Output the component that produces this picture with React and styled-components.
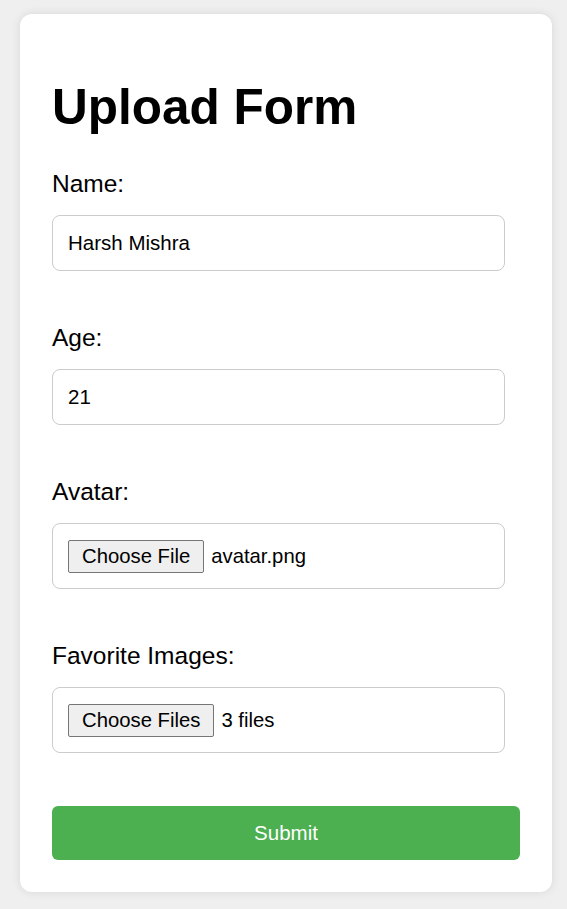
import React, { useState } from "react";
import styled, { createGlobalStyle } from "styled-components";

const GlobalStyle = createGlobalStyle`
  html, body {
    margin: 0;
    padding: 0;
    background: #efefef;
    font-family: "Liberation Sans", Arial, sans-serif;
  }
`;

const Page = styled.div`
  padding: 14px 15px 17px 20px;
`;

const Card = styled.div`
  background: #fff;
  border-radius: 12px;
  box-shadow: 0 0 10px rgba(0, 0, 0, 0.1);
  padding: 64px 32px 32px;
`;

const Title = styled.h1`
  margin: 0 0 35px;
  font-size: 49.5px;
  font-weight: bold;
  line-height: 57px;
  color: #000;
`;

const Field = styled.div`
  display: flex;
  flex-direction: column;
  margin-bottom: 53px;
`;

const Label = styled.label`
  font-size: 24.5px;
  line-height: 28px;
  color: #000;
  margin-bottom: 17px;
`;

const TextInput = styled.input`
  box-sizing: border-box;
  width: calc(100% - 15px);
  height: 56px;
  padding: 0 15px;
  border: 1px solid #ccc;
  border-radius: 8px;
  font-family: inherit;
  font-size: 20.5px;
  color: #000;
  outline: none;
`;

const FileBox = styled.label`
  box-sizing: border-box;
  width: calc(100% - 15px);
  height: 66px;
  display: flex;
  align-items: center;
  padding: 0 15px;
  border: 1px solid #ccc;
  border-radius: 8px;
  font-size: 20.3px;
  color: #000;
  cursor: pointer;

  input {
    display: none;
  }
`;

const FileButton = styled.span`
  box-sizing: border-box;
  height: 33px;
  display: inline-flex;
  align-items: center;
  padding: 0 13px;
  background: #efefef;
  border: 1px solid #767676;
  border-radius: 2px;
  margin-right: 7px;
  white-space: nowrap;
`;

const FileName = styled.span`
  white-space: nowrap;
`;

const SubmitButton = styled.button`
  display: block;
  width: 100%;
  height: 54px;
  margin-top: 1px;
  border: none;
  border-radius: 6px;
  background: #4caf50;
  color: #fff;
  font-family: inherit;
  font-size: 20.5px;
  cursor: pointer;
`;

export default function App() {
  const [form, setForm] = useState({ name: "Harsh Mishra", age: "21" });

  const handleChange = (e) => {
    setForm((prev) => ({ ...prev, [e.target.name]: e.target.value }));
  };

  return (
    <>
      <GlobalStyle />
      <Page>
        <Card>
          <Title>Upload Form</Title>
          <form onSubmit={(e) => e.preventDefault()}>
            <Field>
              <Label htmlFor="name">Name:</Label>
              <TextInput id="name" name="name" value={form.name} onChange={handleChange} />
            </Field>
            <Field>
              <Label htmlFor="age">Age:</Label>
              <TextInput id="age" name="age" value={form.age} onChange={handleChange} />
            </Field>
            <Field>
              <Label as="span">Avatar:</Label>
              <FileBox>
                <input type="file" name="avatar" />
                <FileButton>Choose File</FileButton>
                <FileName>avatar.png</FileName>
              </FileBox>
            </Field>
            <Field>
              <Label as="span">Favorite Images:</Label>
              <FileBox>
                <input type="file" name="images" multiple />
                <FileButton>Choose Files</FileButton>
                <FileName>3 files</FileName>
              </FileBox>
            </Field>
            <SubmitButton type="submit">Submit</SubmitButton>
          </form>
        </Card>
      </Page>
    </>
  );
}
